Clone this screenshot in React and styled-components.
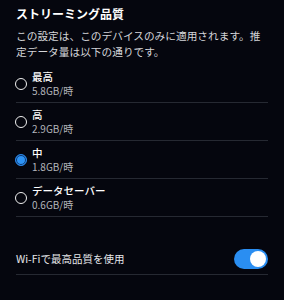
import styled, { createGlobalStyle } from "styled-components"

const GlobalStyle = createGlobalStyle`
  html, body {
    margin: 0;
    padding: 0;
    background: #05060e;
  }
  body {
    font-family: "Noto Sans CJK JP", "Noto Sans", sans-serif;
    color: #ffffff;
  }
`;

const Page = styled.div`
  width: 284px;
  height: 300px;
  box-sizing: border-box;
  padding: 5px 16px 0;
  background: #05060e;
`;

const Title = styled.h2`
  margin: 0;
  font-size: 12px;
  line-height: 17px;
  font-weight: 700;
  color: #ffffff;
`;

const Description = styled.p`
  margin: 6px 0 0;
  font-size: 10.7px;
  line-height: 15.5px;
  color: #d4d5d9;
`;

const OptionList = styled.div`
  margin-top: 6px;
  display: flex;
  flex-direction: column;
`;

const Option = styled.label`
  display: flex;
  align-items: center;
  gap: 5px;
  height: 38px;
  box-sizing: border-box;
  border-bottom: 1px solid #262932;
  cursor: pointer;
`;

const Radio = styled.span`
  width: 12px;
  height: 12px;
  margin-left: -1px;
  box-sizing: border-box;
  border-radius: 50%;
  flex-shrink: 0;
  border: ${(p) => (p.$checked ? "1.5px solid #2a86e8" : "1.7px solid #f0f0f0")};
  background: ${(p) => (p.$checked ? "#2d93f5" : "transparent")};
  box-shadow: ${(p) => (p.$checked ? "inset 0 0 0 1px #0c3166" : "none")};
`;

const OptionText = styled.span`
  display: flex;
  flex-direction: column;
`;

const OptionLabel = styled.span`
  font-size: 10.5px;
  line-height: 14px;
  font-weight: 500;
  color: #ffffff;
`;

const OptionSub = styled.span`
  font-size: 10px;
  line-height: 14px;
  color: #b3b5bb;
`;

const ToggleRow = styled.div`
  margin-top: 27px;
  height: 31px;
  box-sizing: border-box;
  display: flex;
  align-items: center;
  justify-content: space-between;
  border-bottom: 1px solid #262932;
`;

const ToggleLabel = styled.span`
  font-size: 10.5px;
  line-height: 14px;
  color: #e6e7ea;
`;

const Switch = styled.span`
  width: 34px;
  height: 20px;
  border-radius: 10px;
  background: #2a8ef2;
  display: flex;
  align-items: center;
  justify-content: ${(p) => (p.$on ? "flex-end" : "flex-start")};
  padding: 0 2px;
  box-sizing: border-box;
`;

const Knob = styled.span`
  width: 16px;
  height: 16px;
  border-radius: 50%;
  background: #ffffff;
`;

const options = [
  { label: "最高", rate: "5.8GB/時" },
  { label: "高", rate: "2.9GB/時" },
  { label: "中", rate: "1.8GB/時" },
  { label: "データセーバー", rate: "0.6GB/時" },
];

export default function App() {
  const selected = "中";
  return (
    <Page>
      <GlobalStyle />
      <Title>ストリーミング品質</Title>
      <Description>
        この設定は、このデバイスのみに適用されます。推定データ量は以下の通りです。
      </Description>
      <OptionList>
        {options.map((o) => (
          <Option key={o.label}>
            <Radio $checked={o.label === selected} />
            <OptionText>
              <OptionLabel>{o.label}</OptionLabel>
              <OptionSub>{o.rate}</OptionSub>
            </OptionText>
          </Option>
        ))}
      </OptionList>
      <ToggleRow>
        <ToggleLabel>Wi-Fiで最高品質を使用</ToggleLabel>
        <Switch $on>
          <Knob />
        </Switch>
      </ToggleRow>
    </Page>
  );
}
